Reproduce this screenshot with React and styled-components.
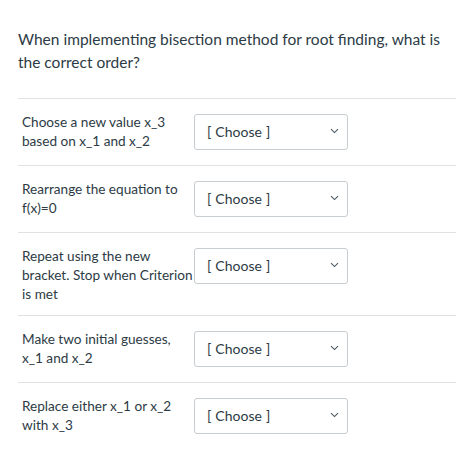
import React from 'react';
import styled, { createGlobalStyle } from 'styled-components';

const GlobalStyle = createGlobalStyle`
  body {
    margin: 0;
    background: #ffffff;
    font-family: Lato, "Open Sans", sans-serif;
    color: #2d3b45;
  }
`;

const Page = styled.div`
  padding: 28px 18px 0 18px;
`;

const Question = styled.p`
  margin: 0 0 24px 0;
  font-size: 15.5px;
  line-height: 23px;
  width: 440px;
`;

const List = styled.div`
  border-top: 1px solid #dfe2e4;
`;

const Row = styled.div`
  display: flex;
  align-items: flex-start;
  padding: 14px 0 11px 4px;
  border-bottom: 1px solid ${(p) => (p.last ? 'transparent' : '#dfe2e4')};
`;

const Label = styled.div`
  flex: 0 0 172px;
  font-size: 13.6px;
  line-height: 19px;
`;

const Select = styled.div`
  margin: 1px 0 4px 0;
  width: 154px;
  height: 36px;
  box-sizing: border-box;
  border: 1px solid #c7cdd1;
  border-radius: 3px;
  display: flex;
  align-items: center;
  justify-content: space-between;
  padding: 0 8px 2px 12px;
  font-size: 14px;
  word-spacing: 0.5px;
  color: #2d3b45;
`;

const Chevron = () => (
  <svg width="9" height="6" viewBox="0 0 9 6" fill="none">
    <path d="M1 1.2 L4.5 4.6 L8 1.2" stroke="#4a5862" strokeWidth="1.1" />
  </svg>
);

const items = [
  'Choose a new value x_3 based on x_1 and x_2',
  'Rearrange the equation to f(x)=0',
  'Repeat using the new bracket. Stop when Criterion is met',
  'Make two initial guesses, x_1 and x_2',
  'Replace either x_1 or x_2 with x_3',
];

export default function App() {
  return (
    <Page>
      <GlobalStyle />
      <Question>
        When implementing bisection method for root finding, what is the correct order?
      </Question>
      <List>
        {items.map((text, i) => (
          <Row key={text} last={i === items.length - 1}>
            <Label>{text}</Label>
            <Select>
              <span>[ Choose ]</span>
              <Chevron />
            </Select>
          </Row>
        ))}
      </List>
    </Page>
  );
}
